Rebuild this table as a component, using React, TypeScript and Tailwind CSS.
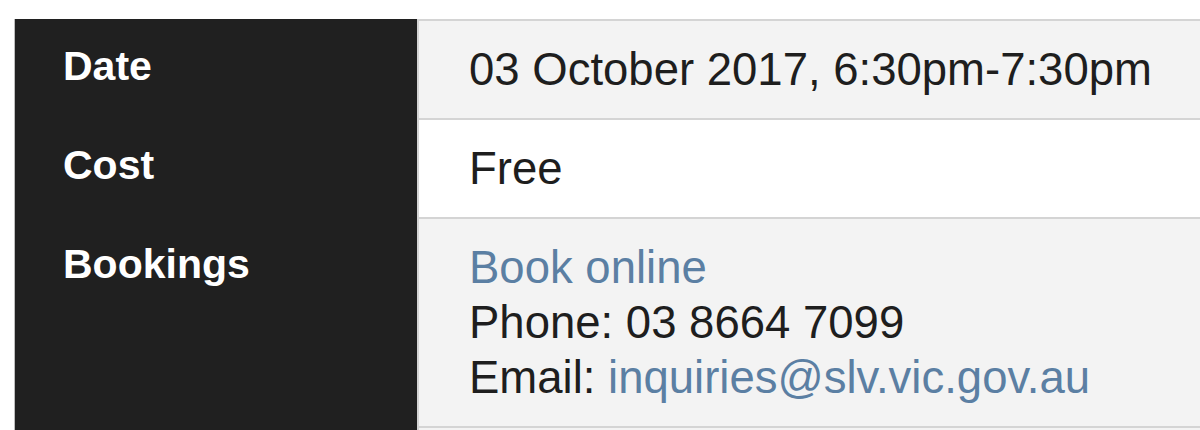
import React from 'react'

const font = { fontFamily: '"Liberation Sans", Arial, sans-serif' }

function Row({ label, children, shaded }: { label: string; children: React.ReactNode; shaded?: boolean }) {
  return (
    <div className="flex">
      <div className="w-[402px] shrink-0 bg-[#202020] pl-[48px] pt-[20px] text-[41px] leading-[55px] font-bold text-white">
        {label}
      </div>
      <div
        className={
          'flex-1 border-t-2 border-l-2 border-[#d4d4d4] pl-[50px] pt-[21px] pb-[21px] text-[45.5px] leading-[55px] text-[#1e1e1e] ' +
          (shaded ? 'bg-[#f3f3f3]' : 'bg-white')
        }
      >
        {children}
      </div>
    </div>
  )
}

export default function App() {
  return (
    <div className="h-[430px] overflow-hidden bg-white pt-[19px] pl-[14px]" style={font}>
      <div className="border-l border-[#bdbdbd]">
        <Row label="Date" shaded>
          03 October 2017, 6:30pm-7:30pm
        </Row>
        <Row label="Cost">Free</Row>
        <Row label="Bookings" shaded>
          <div className="text-[#5b7fa3]">Book online</div>
          <div>Phone: 03 8664 7099</div>
          <div>
            Email: <span className="text-[#5b7fa3]">inquiries@slv.vic.gov.au</span>
          </div>
        </Row>
        <div className="flex h-[40px]">
          <div className="w-[402px] shrink-0 bg-[#202020]" />
          <div className="flex-1 border-t-2 border-l-2 border-[#d4d4d4] bg-[#f3f3f3]" />
        </div>
      </div>
    </div>
  )
}
